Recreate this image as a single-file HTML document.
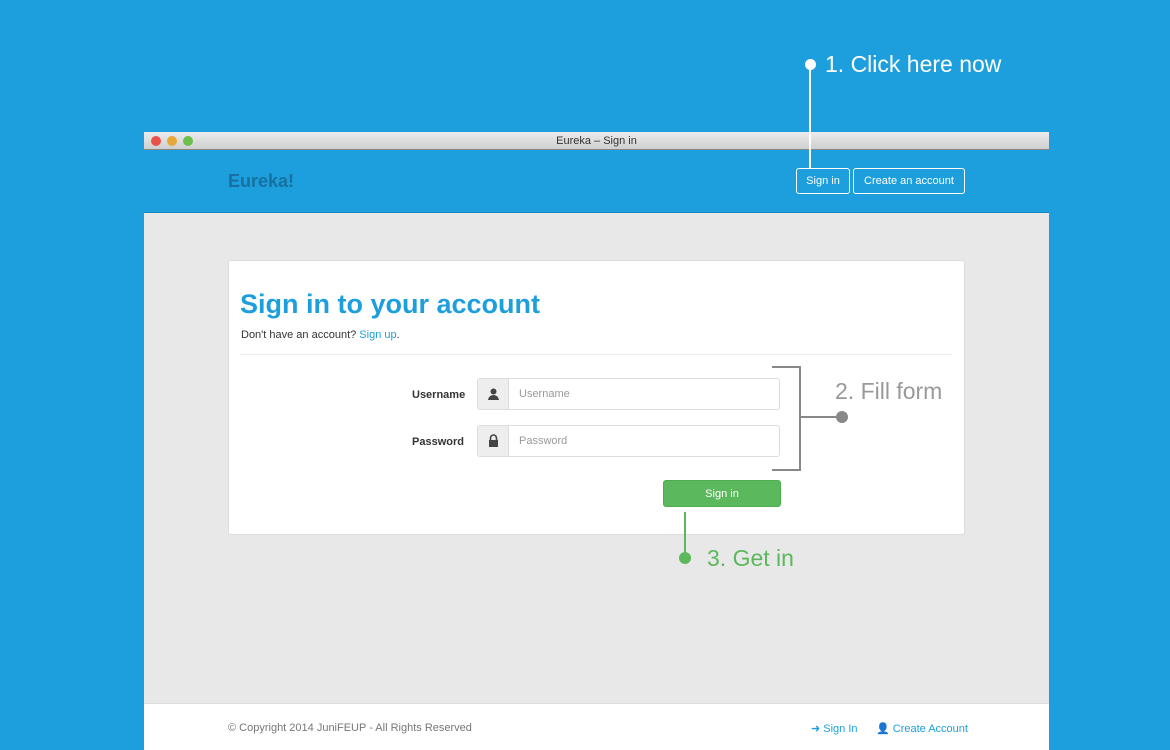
<!DOCTYPE html>
<html><head><style>
*{margin:0;padding:0;box-sizing:border-box}
body{width:1170px;height:750px;background:#1d9fdd;font-family:"Liberation Sans",sans-serif;position:relative;overflow:hidden}
.a{position:absolute}
.win{left:144px;top:132px;width:905px;height:618px;background:#e8e8e8}
.tb{left:0;top:0;width:905px;height:18px;background:linear-gradient(#ececec,#cfcfcf);border-bottom:1px solid #888;border-radius:4px 4px 0 0;font-size:11px;color:#333;text-align:center;line-height:19px}
.dot{top:4px;width:10px;height:10px;border-radius:50%}
.hdr{left:0;top:18px;width:905px;height:63px;background:#1d9fdd;border-bottom:1px solid #1689c3}
.btn{border:1px solid #fff;border-radius:3px;color:#fff;font-size:11px;height:26px;line-height:25px;text-align:center}
.card{left:84px;top:128px;width:737px;height:275px;background:#fff;border:1px solid #ddd;border-radius:3px}
.lbl{font-size:11px;font-weight:bold;color:#333}
.grp{width:303px;height:32px;border:1px solid #ddd;border-radius:3px;background:#fff}
.ad{left:0;top:0;width:31px;height:30px;background:#eee;border-right:1px solid #ddd}
.ph{left:41px;top:0;line-height:31px;font-size:11px;color:#999}
.foot{left:0;top:571px;width:905px;height:47px;background:#fff;border-top:1px solid #ddd;font-size:11px}
</style></head><body>
<div class="a win">
 <div class="a tb">Eureka – Sign in</div>
 <div class="a dot" style="left:7px;background:#e8524a"></div>
 <div class="a dot" style="left:23px;background:#e6a93a"></div>
 <div class="a dot" style="left:39px;background:#6cbf4b"></div>
 <div class="a hdr">
  <div class="a" style="left:84px;top:21px;font-size:18px;font-weight:bold;color:#17709f">Eureka!</div>
  <div class="a btn" style="left:652px;top:18px;width:54px">Sign in</div>
  <div class="a btn" style="left:709px;top:18px;width:112px">Create an account</div>
 </div>
 <div class="a card">
  <div class="a" style="left:11px;top:28px;font-size:27px;font-weight:bold;color:#1d9fdd">Sign in to your account</div>
  <div class="a" style="left:12px;top:68px;font-size:11px;color:#333">Don't have an account? <span style="color:#1d9fdd">Sign up</span>.</div>
  <div class="a" style="left:11px;top:93px;width:712px;height:1px;background:#eee"></div>
  <div class="a lbl" style="left:183px;top:128px">Username</div>
  <div class="a grp" style="left:248px;top:117px"><div class="a ad"><svg class="a" style="left:10px;top:9px" width="11" height="12" viewBox="0 0 11 12"><circle cx="5.5" cy="3.5" r="3" fill="#444"/><path d="M0 12 Q1 7 5.5 7 Q10 7 11 12Z" fill="#444"/></svg></div><div class="a ph">Username</div></div>
  <div class="a lbl" style="left:183px;top:175px">Password</div>
  <div class="a grp" style="left:248px;top:164px"><div class="a ad"><svg class="a" style="left:10px;top:8px" width="11" height="13" viewBox="0 0 11 13"><path d="M2.5 6V4a3 3 0 0 1 6 0v2" stroke="#444" stroke-width="1.6" fill="none"/><rect x="1" y="6" width="9" height="7" fill="#444"/></svg></div><div class="a ph">Password</div></div>
  <div class="a" style="left:434px;top:219px;width:118px;height:27px;background:#5cb85c;border:1px solid #4cae4c;border-radius:3px;color:#fff;font-size:11px;text-align:center;line-height:26px">Sign in</div>
 </div>
 <div class="a foot">
  <div class="a" style="left:84px;top:18px;color:#777">© Copyright 2014 JuniFEUP - All Rights Reserved</div>
  <div class="a" style="left:667px;top:18px;color:#1d9fdd">➜ Sign In</div>
  <div class="a" style="left:732px;top:18px;color:#1d9fdd">👤 Create Account</div>
 </div>
</div>
<div class="a" style="left:805px;top:59px;width:11px;height:11px;border-radius:50%;background:#fff"></div>
<div class="a" style="left:809px;top:64px;width:2px;height:104px;background:#fff"></div>
<div class="a" style="left:825px;top:51px;font-size:23px;color:#fff">1. Click here now</div>
<div class="a" style="left:772px;top:366px;width:29px;height:105px;border:2px solid #888;border-left:none"></div>
<div class="a" style="left:800px;top:416px;width:42px;height:2px;background:#888"></div>
<div class="a" style="left:836px;top:411px;width:12px;height:12px;border-radius:50%;background:#888"></div>
<div class="a" style="left:835px;top:378px;font-size:23px;color:#999">2. Fill form</div>
<div class="a" style="left:684px;top:512px;width:2px;height:46px;background:#5cb85c"></div>
<div class="a" style="left:679px;top:552px;width:12px;height:12px;border-radius:50%;background:#5cb85c"></div>
<div class="a" style="left:707px;top:545px;font-size:23px;color:#5cb85c">3. Get in</div>
</body></html>
